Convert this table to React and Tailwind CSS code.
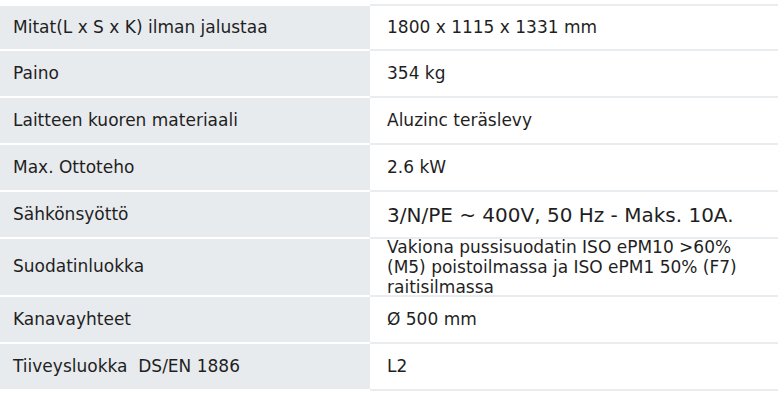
const ROWS = [
  { label: "Mitat(L x S x K) ilman jalustaa", value: "1800 x 1115 x 1331 mm" },
  { label: "Paino", value: "354 kg" },
  { label: "Laitteen kuoren materiaali", value: "Aluzinc teräslevy" },
  { label: "Max. Ottoteho", value: "2.6 kW" },
  { label: "Sähkönsyöttö", value: "3/N/PE ~ 400V, 50 Hz - Maks. 10A.", big: true },
  {
    label: "Suodatinluokka",
    lines: ["Vakiona pussisuodatin ISO ePM10 >60%", "(M5) poistoilmassa ja ISO ePM1 50% (F7)", "raitisilmassa"],
  },
  { label: "Kanavayhteet", value: "Ø 500 mm" },
  { label: "Tiiveysluokka  DS/EN 1886", value: "L2" },
];

export default function App() {
  return (
    <div className="h-[406px] w-[782px] overflow-hidden bg-white pt-[4px] font-['DejaVu_Sans',sans-serif] text-[17px] text-[#1f1f1f]">
      <div className="grid w-[778px] grid-cols-[370px_408px]">
        {ROWS.map((r, i) => {
          const h = r.lines ? "h-[58px]" : "h-[47px]";
          const top = i === 0 ? "border-t-2" : "";
          return [
            <div
              key={`l${i}`}
              className={`flex items-center whitespace-pre border-b-2 border-white bg-[#e8ebee] px-[13px] ${h} ${top}`}
            >
              {r.label}
            </div>,
            <div
              key={`r${i}`}
              className={`flex items-center overflow-hidden border-b-2 border-[#eaedf0] pl-[17px] ${h} ${top}`}
            >
              {r.lines ? (
                <div className="whitespace-nowrap leading-[20px]">
                  {r.lines.map((t) => (
                    <div key={t}>{t}</div>
                  ))}
                </div>
              ) : (
                <span className={r.big ? "text-[20px]" : ""}>{r.value}</span>
              )}
            </div>,
          ];
        })}
      </div>
    </div>
  );
}
